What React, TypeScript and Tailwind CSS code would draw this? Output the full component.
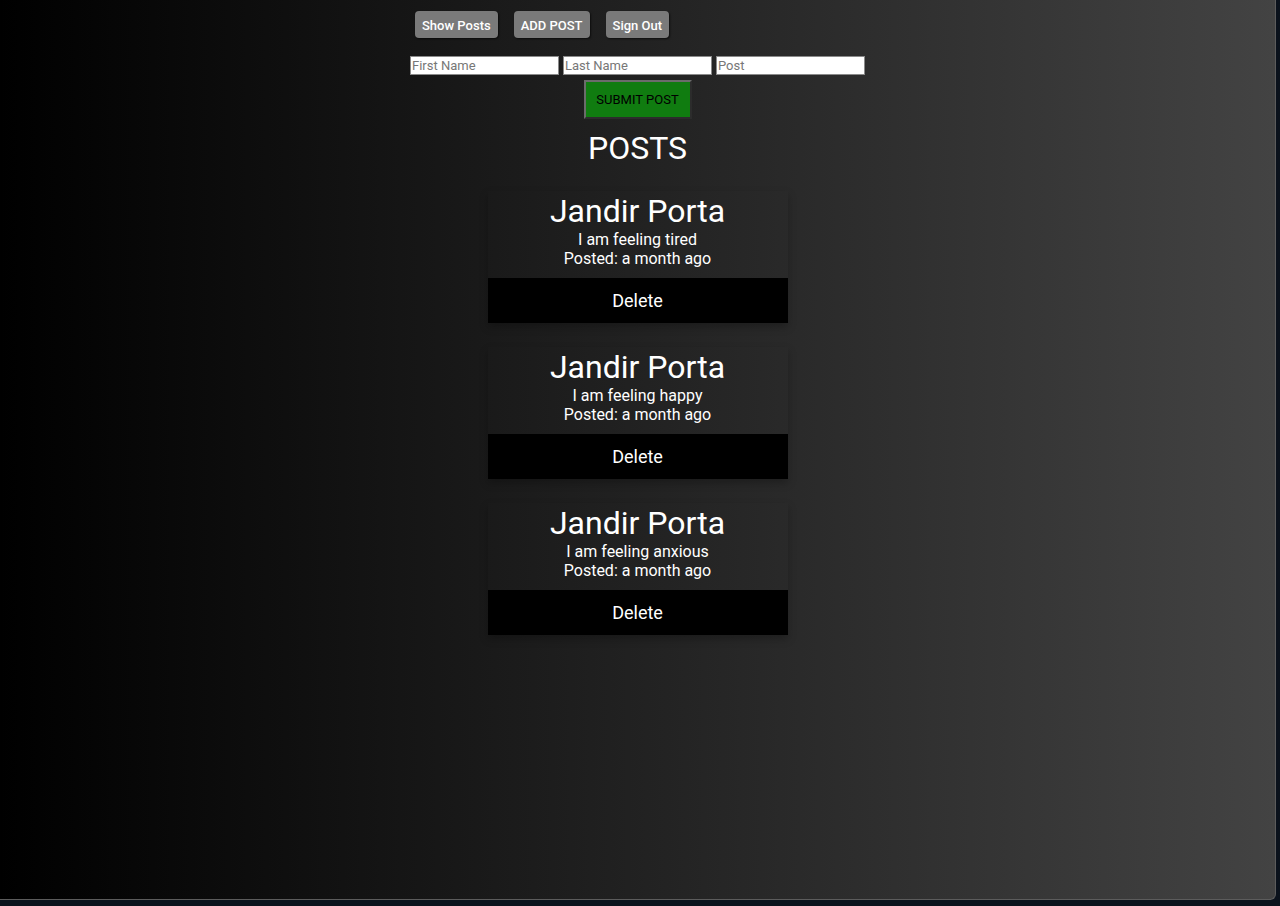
import React from 'react';

const posts = [
  { id: 1, first: 'Jandir', last: 'Porta', text: 'I am feeling tired', when: 'a month ago' },
  { id: 2, first: 'Jandir', last: 'Porta', text: 'I am feeling happy', when: 'a month ago' },
  { id: 3, first: 'Jandir', last: 'Porta', text: 'I am feeling anxious', when: 'a month ago' },
];

function NavButton({ label }: { label: string }) {
  return (
    <button className="h-[27px] px-[7px] pt-[1px] rounded-[4px] bg-[#7a7a7a] text-white text-[13px] font-medium leading-none shadow-[1px_1px_2px_rgba(0,0,0,0.6)]">
      {label}
    </button>
  );
}

function PostCard({ first, last, text, when }: { first: string; last: string; text: string; when: string }) {
  return (
    <div className="w-[300px] flex flex-col items-center pt-[2px] shadow-[0_4px_8px_0_rgba(0,0,0,0.25)]">
      <h2 className="text-[32px] leading-[37px] text-white">{first} {last}</h2>
      <p className="text-[16px] leading-[19px] text-white">{text}</p>
      <p className="text-[16px] leading-[19px] text-white">Posted: {when}</p>
      <button className="mt-[10px] w-full h-[45px] bg-black text-white text-[18px]">Delete</button>
    </div>
  );
}

export default function App() {
  return (
    <div className="w-[1280px] h-[906px] bg-[#0b121c] overflow-hidden" style={{ fontFamily: 'Roboto, "Liberation Sans", sans-serif' }}>
      <div className="w-[1276px] h-[900px] rounded-br-[6px] border-r border-b border-[#5c5c5c] bg-[linear-gradient(to_right,#000000,#434343)] flex flex-col items-center">
        <div className="w-[455px] flex flex-col items-center">
          {/* nav */}
          <div className="self-start ml-[5px] mt-[11px] flex gap-4">
            <NavButton label="Show Posts" />
            <NavButton label="ADD POST" />
            <NavButton label="Sign Out" />
          </div>

          {/* form */}
          <div className="mt-[18px] flex gap-[4px]">
            <input placeholder="First Name" className="w-[149px] h-[19px] bg-white border border-[#8a8a8a] px-[1px] text-[13px] text-black placeholder:text-[#777] outline-none" />
            <input placeholder="Last Name" className="w-[149px] h-[19px] bg-white border border-[#8a8a8a] px-[1px] text-[13px] text-black placeholder:text-[#777] outline-none" />
            <input placeholder="Post" className="w-[149px] h-[19px] bg-white border border-[#8a8a8a] px-[1px] text-[13px] text-black placeholder:text-[#777] outline-none" />
          </div>
          <button className="mt-[5px] w-[108px] h-[39px] bg-[#107c10] border-2 border-t-[#6b6b6b] border-l-[#6b6b6b] border-r-[#2c2c2c] border-b-[#2c2c2c] text-black text-[13px]">
            SUBMIT POST
          </button>

          <h1 className="mt-[11px] text-[32px] leading-[37px] text-white">POSTS</h1>
        </div>

        <div className="mt-[24px] flex flex-col gap-[24px]">
          {posts.map((p) => (
            <PostCard key={p.id} first={p.first} last={p.last} text={p.text} when={p.when} />
          ))}
        </div>
      </div>
    </div>
  );
}
